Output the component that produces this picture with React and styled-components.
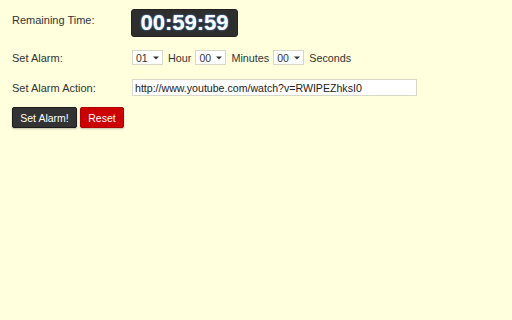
import styled, { createGlobalStyle } from "styled-components";

const GlobalStyle = createGlobalStyle`
  html, body {
    margin: 0;
    padding: 0;
    background: #ffffdd;
  }
  body {
    width: 512px;
    height: 320px;
    overflow: hidden;
    font-family: "Liberation Sans", Arial, sans-serif;
    color: #222;
  }
`;

const Page = styled.div`
  padding: 9px 12px;
  display: flex;
  flex-direction: column;
`;

const Row = styled.div`
  display: flex;
  align-items: ${(p) => (p.$top ? "flex-start" : "center")};
  margin-top: ${(p) => p.$gap || 0}px;
`;

const Label = styled.div`
  width: 120px;
  flex: none;
  font-size: 11px;
  color: #333;
  padding-top: ${(p) => p.$pad || 0}px;
`;

const Timer = styled.div`
  width: 107px;
  height: 28px;
  margin-left: -1px;
  box-sizing: border-box;
  background: #2e2e2e;
  border-radius: 3px;
  border: 1px solid #222;
  display: flex;
  align-items: center;
  justify-content: center;
  color: #fff;
  font-weight: bold;
  font-size: 22px;
  text-shadow: 0 0 2px #4a8ad8, 0 0 1px #4a8ad8;
`;

const SelectBox = styled.div`
  width: 31px;
  height: 15px;
  box-sizing: border-box;
  background: #fff;
  border: 1px solid #d8d8c8;
  display: flex;
  align-items: center;
  justify-content: space-between;
  padding: 0 3px 0 3px;
  font-size: 10.5px;
  color: #333;
`;

const Caret = styled.svg`
  width: 6px;
  height: 4px;
`;

const Unit = styled.span`
  font-size: 10.8px;
  color: #333;
  margin: 0 4px 0 5px;
`;

const UrlInput = styled.div`
  width: 285px;
  height: 17px;
  box-sizing: border-box;
  background: #fff;
  border: 1px solid #d8d8c8;
  display: flex;
  align-items: center;
  padding: 0 2px;
  font-size: 10.6px;
  color: #222;
`;

const Buttons = styled.div`
  display: flex;
  gap: 3px;
  margin-top: 11px;
`;

const Button = styled.button`
  height: 21px;
  box-sizing: border-box;
  border-radius: 2px;
  border: 1px solid ${(p) => (p.$danger ? "#b00000" : "#1c1c1c")};
  background: ${(p) => (p.$danger ? "#cc0000" : "#333333")};
  color: #fff;
  font-family: "Liberation Sans", Arial, sans-serif;
  font-size: 10.5px;
  box-shadow: 0 1px 2px rgba(0, 0, 0, 0.25);
  width: ${(p) => p.$w}px;
  padding: 0;
`;

const Select = ({ value }) => (
  <SelectBox>
    <span>{value}</span>
    <Caret viewBox="0 0 6 4">
      <path d="M0 0.5 L6 0.5 L3 3.5 Z" fill="#333" />
    </Caret>
  </SelectBox>
);

export default function App() {
  return (
    <>
      <GlobalStyle />
      <Page>
        <Row $top>
          <Label $pad={5}>Remaining Time:</Label>
          <Timer>00:59:59</Timer>
        </Row>
        <Row $gap={13}>
          <Label>Set Alarm:</Label>
          <Select value="01" />
          <Unit>Hour</Unit>
          <Select value="00" />
          <Unit>Minutes</Unit>
          <Select value="00" />
          <Unit>Seconds</Unit>
        </Row>
        <Row $gap={14}>
          <Label>Set Alarm Action:</Label>
          <UrlInput>http://www.youtube.com/watch?v=RWIPEZhksI0</UrlInput>
        </Row>
        <Buttons>
          <Button $w={65}>Set Alarm!</Button>
          <Button $danger $w={44}>Reset</Button>
        </Buttons>
      </Page>
    </>
  );
}
